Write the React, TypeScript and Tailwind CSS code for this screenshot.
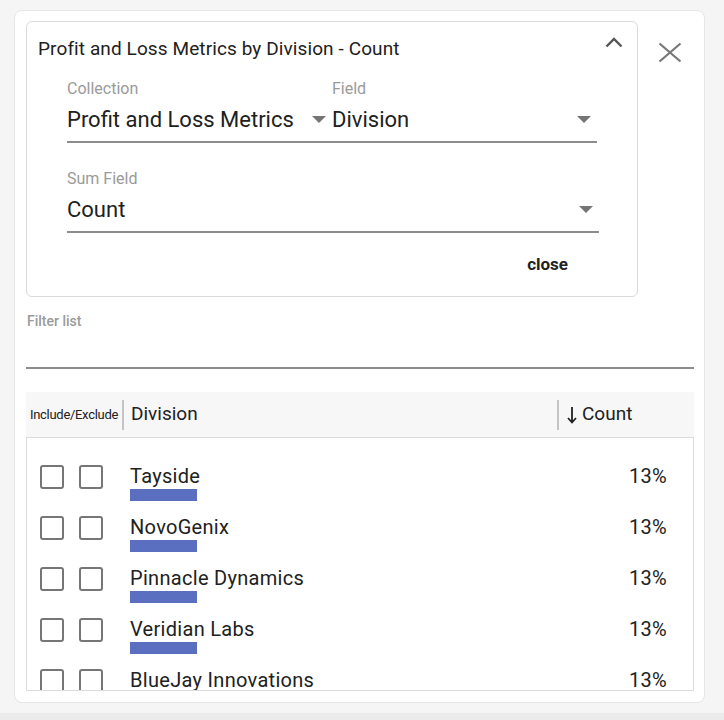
const rows = [
  { name: "Tayside", pct: "13%" },
  { name: "NovoGenix", pct: "13%" },
  { name: "Pinnacle Dynamics", pct: "13%" },
  { name: "Veridian Labs", pct: "13%" },
  { name: "BlueJay Innovations", pct: "13%" },
];

function Caret() {
  return (
    <svg width="14" height="7" viewBox="0 0 14 7" className="shrink-0">
      <path d="M0 0h14L7 7z" fill="#757575" />
    </svg>
  );
}

function SelectField({ label, value, className }: { label: string; value: string; className?: string }) {
  return (
    <div className={className}>
      <div className="text-[16px] leading-[18px] text-[#9a9a9a]">{label}</div>
      <div className="flex items-center justify-between pr-[6px] h-[45px] border-b-2 border-[#8c8c8c]">
        <span className="text-[22px] leading-[26px] text-[#212121]">{value}</span>
        <Caret />
      </div>
    </div>
  );
}

function Box() {
  return <div className="w-[24px] h-[24px] shrink-0 rounded-[3px] border-[2.5px] border-[#767676]" />;
}

export default function App() {
  return (
    <div className="h-[720px] bg-[#f5f5f5] flex flex-col font-['Roboto',sans-serif] text-[#212121] overflow-hidden">
      <div className="ml-[14px] mt-[10px] w-[691px] h-[693px] bg-white rounded-lg border border-[#e6e6e6] pl-[11px] pr-[10px] pt-[10px] flex flex-col">
        <div className="flex">
          <div className="w-[612px] h-[276px] rounded-md border border-[#dadada] pl-[11px] pr-[40px] pt-[16px] flex flex-col">
            <div className="flex items-start justify-between -mr-[26px]">
              <span className="text-[19px] leading-[22px] tracking-[0.1px]">Profit and Loss Metrics by Division - Count</span>
              <svg width="18" height="11" viewBox="0 0 18 11" className="mt-[-1px]">
                <polyline points="1.5,9.5 9,2 16.5,9.5" fill="none" stroke="#555" strokeWidth="2.4" />
              </svg>
            </div>
            <div className="flex pl-[29px] mt-[20px]">
              <SelectField label="Collection" value="Profit and Loss Metrics" className="w-[266px]" />
              <SelectField label="Field" value="Division" className="w-[266px]" />
            </div>
            <SelectField label="Sum Field" value="Count" className="ml-[29px] mt-[27px] w-[532px]" />
            <div className="flex justify-end mt-[21px] pr-[29px]">
              <span className="text-[17px] leading-[20px] font-bold text-[#222]">close</span>
            </div>
          </div>
          <div className="flex-1 flex justify-center pl-[7px] pt-[21px]">
            <svg width="24" height="21" viewBox="0 0 24 21">
              <path d="M1.5 1.5L22.5 19.5M22.5 1.5L1.5 19.5" stroke="#777" strokeWidth="2.2" fill="none" />
            </svg>
          </div>
        </div>

        <div className="mt-[15px] text-[14px] leading-[18px] text-[#9a9a9a] pl-[1px] font-medium">Filter list</div>
        <div className="h-[39px] border-b-2 border-[#8c8c8c]" />

        <div className="mt-[23px] h-[45px] bg-[#f7f7f7] flex items-center">
          <span className="text-[13px] pl-[4px] w-[96px] tracking-[-0.3px]">Include/Exclude</span>
          <div className="w-[2px] h-[30px] bg-[#c4c4c4]" />
          <span className="text-[19px] pl-[7px] flex-1">Division</span>
          <div className="w-[2px] h-[30px] bg-[#c4c4c4]" />
          <div className="pl-[8px] w-[135px] flex items-center gap-[5px]">
            <svg width="10" height="18" viewBox="0 0 10 18">
              <path d="M5 1V16M1 12L5 16.5L9 12" stroke="#212121" strokeWidth="1.8" fill="none" />
            </svg>
            <span className="text-[19px]">Count</span>
          </div>
        </div>

        <div className="h-[254px] border border-[#dcdcdc] overflow-hidden pt-[26px] pl-[13px] pr-[26px]">
          {rows.map((r) => (
            <div key={r.name} className="h-[51px] shrink-0 flex items-start">
              <div className="flex gap-[15px] mt-[1px]">
                <Box />
                <Box />
              </div>
              <div className="ml-[27px] flex-1 flex flex-col">
                <span className="text-[20px] leading-[24px] tracking-[0.3px]">{r.name}</span>
                <div className="mt-[1px] w-[67px] h-[12px] bg-[#5a6fbf]" />
              </div>
              <span className="text-[20px] leading-[24px] tracking-[0.3px]">{r.pct}</span>
            </div>
          ))}
        </div>
      </div>
      <div className="mt-[10px] flex-1 bg-[#ebebeb]" />
    </div>
  );
}
